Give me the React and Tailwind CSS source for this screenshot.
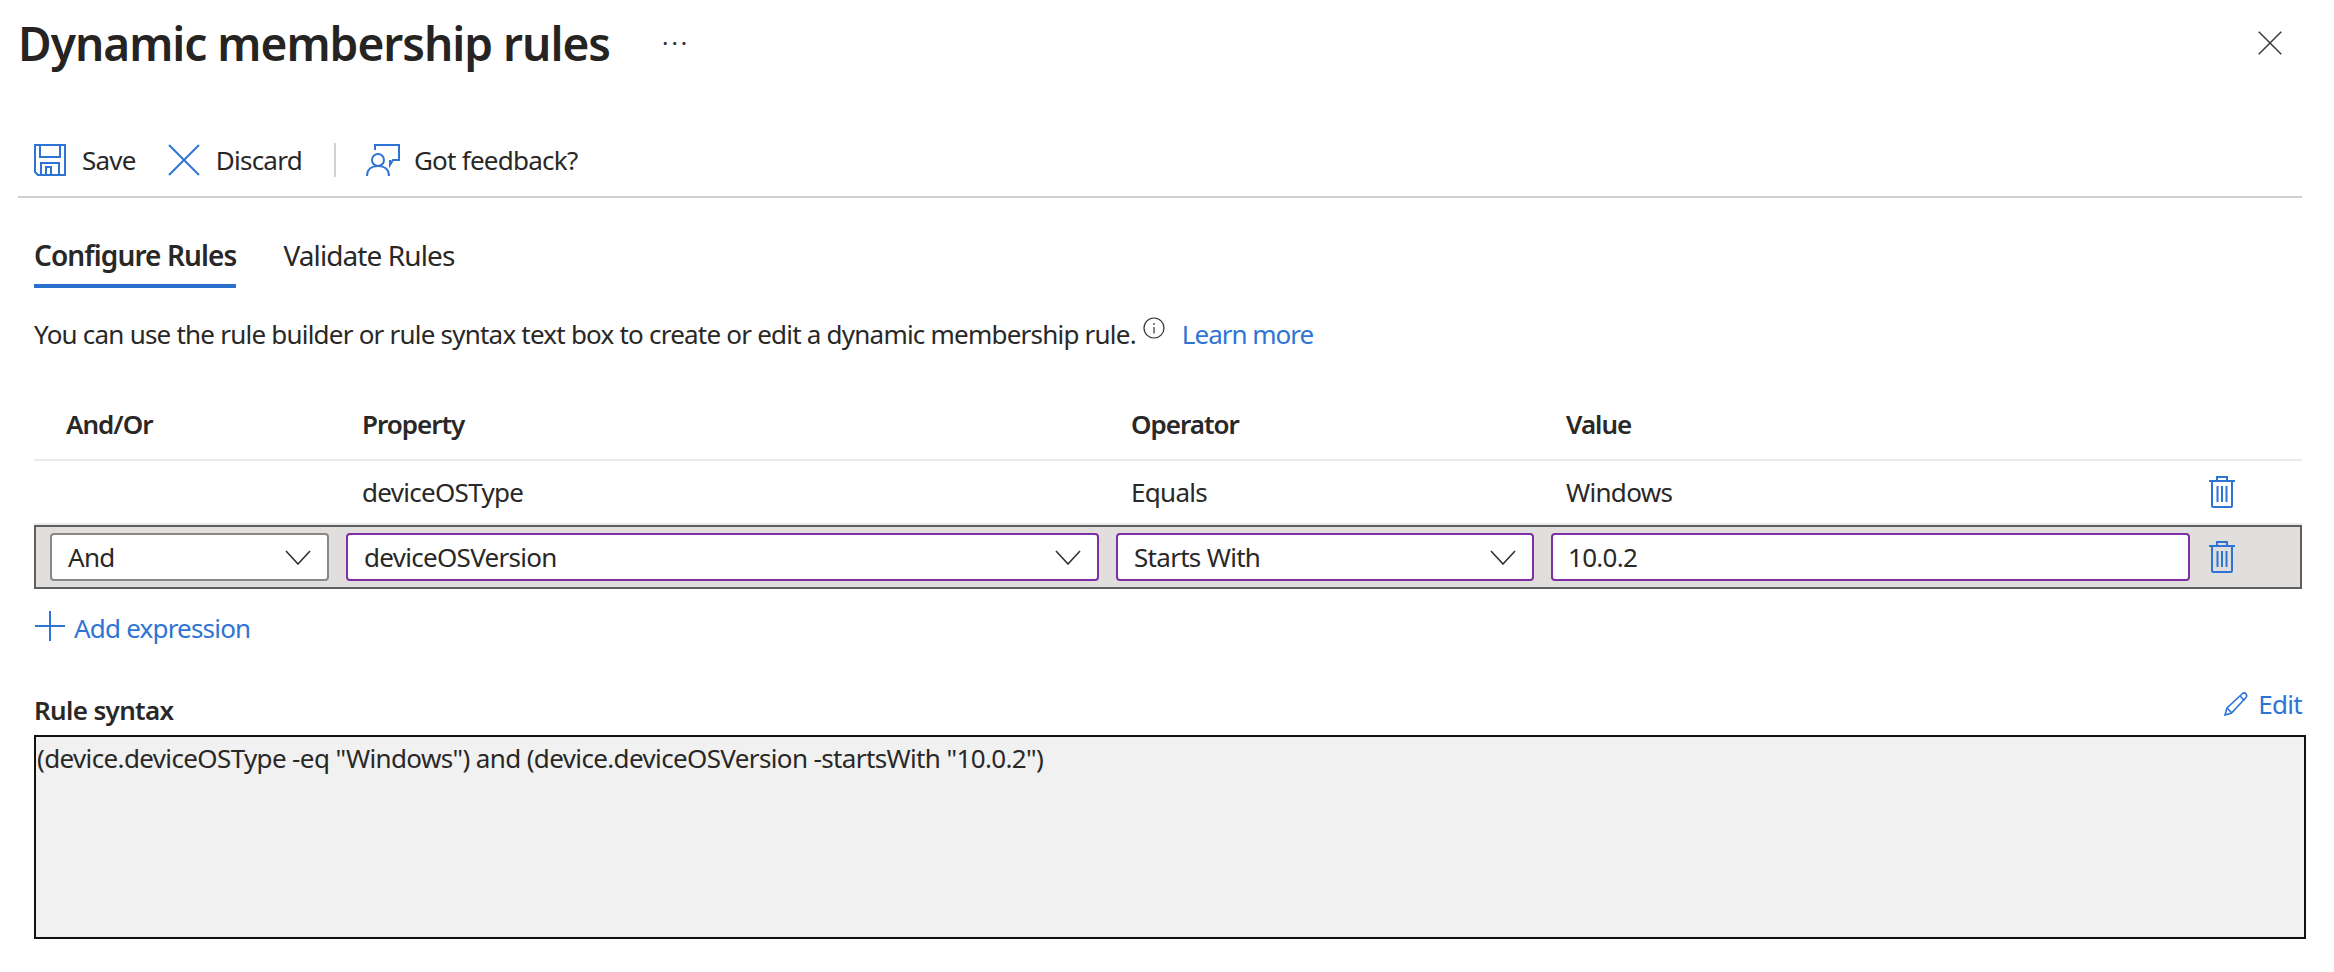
const BLUE = "#2e74d4";

function SaveIcon() {
  return (
    <svg width="32" height="32" viewBox="0 0 32 32" fill="none" stroke={BLUE} strokeWidth="2" className="shrink-0">
      <path d="M1 1h30v30H4l-3-3z" />
      <path d="M6 1v12h20V1" />
      <path d="M7 31V19h18v12" />
      <path d="M12 31v-8h5v8" />
    </svg>
  );
}
function XIcon({ size = 32, color = BLUE, width = 2 }) {
  return (
    <svg width={size} height={size} viewBox="0 0 32 32" fill="none" stroke={color} strokeWidth={width} className="shrink-0">
      <path d="M1 1l30 30M31 1L1 31" />
    </svg>
  );
}
function FeedbackIcon() {
  return (
    <svg width="34" height="32" viewBox="0 0 34 32" fill="none" stroke={BLUE} strokeWidth="2" className="shrink-0">
      <path d="M9 6V1h24v15h-6l-3 5v-5" />
      <circle cx="12" cy="16" r="6" />
      <path d="M1 32c0-7 5-10 11-10s11 3 11 10" />
    </svg>
  );
}
function Chevron() {
  return (
    <svg width="26" height="15" viewBox="0 0 26 15" fill="none" stroke="#323130" strokeWidth="1.6" className="shrink-0">
      <path d="M1 1l12 13L25 1" />
    </svg>
  );
}
function Trash() {
  return (
    <svg width="26" height="32" viewBox="0 0 26 32" fill="none" stroke={BLUE} strokeWidth="2" className="shrink-0">
      <path d="M0 5h26" />
      <path d="M8 4V1h10v3" />
      <path d="M3 5v25a1 1 0 0 0 1 1h18a1 1 0 0 0 1-1V5" />
      <path d="M8.5 10v16M13 10v16M17.5 10v16" />
    </svg>
  );
}
function Pencil() {
  return (
    <svg width="24" height="24" viewBox="0 0 24 24" fill="none" stroke={BLUE} strokeWidth="1.6" className="shrink-0">
      <path d="M1 23l2-7L18 2c1.500-1.500 3-1.500 4 0s1 2.500 0 3.500L7.500 21z" />
      <path d="M3 16l5 5M16 4l4.500 4.500" />
    </svg>
  );
}
function Plus() {
  return (
    <svg width="30" height="30" viewBox="0 0 30 30" fill="none" stroke={BLUE} strokeWidth="2" className="shrink-0">
      <path d="M0 15h30M15 0v30" />
    </svg>
  );
}
function Info() {
  return (
    <svg width="22" height="22" viewBox="0 0 22 22" fill="none" stroke="#323130" strokeWidth="1.200" className="shrink-0">
      <circle cx="11" cy="11" r="10" />
      <path d="M11 10v6.500M11 6v2" />
    </svg>
  );
}
function SelectBox({ children, purple, chevron = true, pad = "pl-[16px] pr-[16px]" }) {
  return (
    <div className={`h-[48px] rounded-[4px] border-2 bg-white flex items-center justify-between ${pad} ${purple ? "border-[#7f2fa5]" : "border-[#8a8886]"}`}>
      <span>{children}</span>
      {chevron && <Chevron />}
    </div>
  );
}

export default function App() {
  const cols = "grid grid-cols-[279px_753px_418px_639px_1fr] gap-x-[17px] pl-[16px]";
  return (
    <div className="w-[2334px] h-[972px] bg-white overflow-hidden text-[#292827] text-[26px] leading-[34px] font-['Noto_Sans','Open_Sans',sans-serif] tracking-[-0.7px]">
      <header className="h-[86px] flex items-center pl-[18px] pr-[52px]">
        <h1 className="text-[46px] leading-[56px] font-semibold tracking-[-1px] text-[#252423] mr-[52px]">Dynamic membership rules</h1>
        <span className="text-[#323130] text-[24px] leading-none tracking-[3px]">···</span>
        <button className="ml-auto"><XIcon size={24} color="#3b3a39" /></button>
      </header>

      <div className="ml-[18px] w-[2284px] h-[112px] pt-[38px] border-b-2 border-[#d2d0ce] flex items-center pl-[16px] box-border tracking-[-0.75px]">
        <SaveIcon />
        <span className="ml-[16px]">Save</span>
        <span className="ml-[32px]"><XIcon /></span>
        <span className="ml-[16px]">Discard</span>
        <span className="ml-[32px] w-[2px] h-[34px] bg-[#d2d0ce]"></span>
        <span className="ml-[30px]"><FeedbackIcon /></span>
        <span className="ml-[14px]">Got feedback?</span>
      </div>

      <nav className="mt-[28px] ml-[34px] flex gap-[47px] h-[62px] text-[28px] tracking-[-0.9px]">
        <div className="border-b-4 border-[#2b6fcf] font-semibold flex items-center">Configure Rules</div>
        <div className="flex items-center pb-[4px]">Validate Rules</div>
      </nav>

      <p className="mt-[29px] ml-[34px] flex items-start tracking-[-0.78px]">
        You can use the rule builder or rule syntax text box to create or edit a dynamic membership rule.
        <span className="ml-[7px] mt-0"><Info /></span>
        <a className="ml-[17px] text-[#2e74d4] tracking-[-1px]">Learn more</a>
      </p>

      <section className="mt-[50px] ml-[34px] w-[2268px]">
        <div className={`${cols} h-[46px] border-b-2 border-[#edebe9] items-center font-semibold pb-[12px] box-content tracking-[-1px]`}>
          <div className="pl-[16px]">And/Or</div>
          <div className="pl-[16px]">Property</div>
          <div className="pl-[15px]">Operator</div>
          <div className="pl-[15px]">Value</div>
          <div></div>
        </div>
        <div className={`${cols} h-[64px] items-center border-b-2 border-[#edebe9] box-border`}>
          <div></div>
          <div className="pl-[16px]">deviceOSType</div>
          <div className="pl-[15px]">Equals</div>
          <div className="pl-[15px]">Windows</div>
          <div className="pl-[2px]"><Trash /></div>
        </div>
        <div className={`${cols} h-[64px] items-center border-2 border-[#605e5c] bg-[#e1dfdd] box-border !pl-[14px]`}>
          <SelectBox>And</SelectBox>
          <SelectBox purple>deviceOSVersion</SelectBox>
          <SelectBox purple>Starts With</SelectBox>
          <SelectBox purple chevron={false} pad="pl-[15px]">10.0.2</SelectBox>
          <div className="pl-[2px]"><Trash /></div>
        </div>
      </section>

      <div className="mt-[22px] ml-[35px] flex items-center h-[30px]">
        <Plus />
        <span className="ml-[9px] text-[#2e74d4] mt-[3px] tracking-[-0.8px]">Add expression</span>
      </div>

      <div className="mt-[50px] ml-[34px] w-[2268px] flex items-end justify-between h-[36px]">
        <span className="font-semibold tracking-[-0.65px]">Rule syntax</span>
        <span className="flex items-center text-[#2e74d4] -mt-[6px] mb-[6px]">
          <Pencil />
          <span className="ml-[10px]">Edit</span>
        </span>
      </div>

      <div className="mt-[8px] ml-[34px] w-[2272px] h-[204px] border-2 border-[#111111] bg-[#f1f1f1] pt-[4px] pl-[1px] tracking-[-0.63px]">
        (device.deviceOSType -eq "Windows") and (device.deviceOSVersion -startsWith "10.0.2")
      </div>
    </div>
  );
}
